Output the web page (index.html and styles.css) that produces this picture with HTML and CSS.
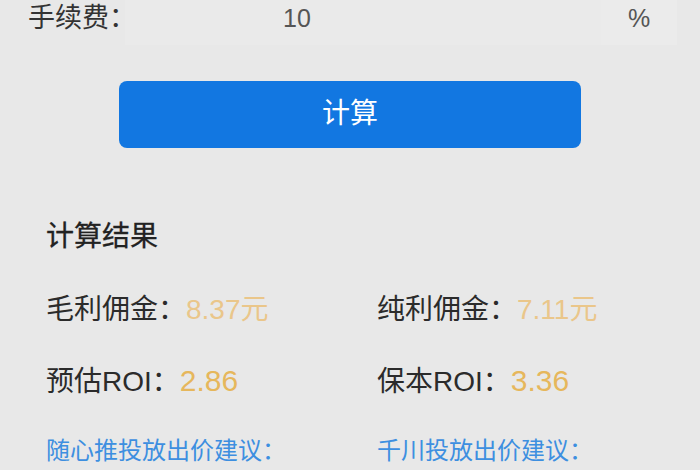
FILE: index.html
```html
<!DOCTYPE html>
<html lang="zh">
<head>
<meta charset="utf-8">
<link rel="stylesheet" href="styles.css">
</head>
<body>
<div class="page">
  <div class="fee-row">
    <span class="fee-label">手续费：</span>
    <div class="fee-input">10</div>
    <div class="fee-unit">%</div>
  </div>
  <div class="btn-wrap">
    <div class="btn">计算</div>
  </div>
  <div class="results">
    <div class="title">计算结果</div>
    <div class="grid">
      <div class="item">毛利佣金：<span class="val light">8.37元</span></div>
      <div class="item">纯利佣金：<span class="val light">7.11元</span></div>
      <div class="item">预估ROI：<span class="val">2.86</span></div>
      <div class="item">保本ROI：<span class="val">3.36</span></div>
      <div class="item link">随心推投放出价建议：</div>
      <div class="item link">千川投放出价建议：</div>
    </div>
  </div>
</div>
</body>
</html>
```
FILE: styles.css
```css
html, body {
  margin: 0;
  padding: 0;
  background: #e8e8e8;
}
body {
  width: 700px;
  height: 470px;
  overflow: hidden;
  font-family: "Liberation Sans", "Noto Sans CJK SC", sans-serif;
  color: #2a2a2a;
}
.fee-row {
  display: flex;
  height: 45px;
  padding-left: 28px;
}
.fee-label {
  flex: 0 0 97px;
  min-width: 0;
  white-space: nowrap;
  font-size: 27px;
  line-height: 36px;
  color: #333;
  position: relative;
  z-index: 1;
}
.fee-input {
  flex: 0 0 318px;
  padding-left: 158px;
  background: #eaeaea;
  font-size: 25px;
  line-height: 36px;
  color: #555;
}
.fee-unit {
  flex: 0 0 76px;
  background: #ebebeb;
  text-align: center;
  font-size: 25px;
  line-height: 36px;
  color: #555;
}
.btn-wrap {
  padding: 36px 0 0 119px;
}
.btn {
  width: 462px;
  height: 67px;
  border-radius: 8px;
  background: #1277e1;
  color: #fff;
  font-size: 28px;
  line-height: 65px;
  text-align: center;
}
.results {
  padding: 72px 0 0 46px;
}
.title {
  font-size: 28px;
  line-height: 34px;
  color: #222;
  -webkit-text-stroke: 0.3px #222;
}
.grid {
  display: grid;
  grid-template-columns: 331px auto;
  row-gap: 35px;
  margin-top: 38px;
}
.item {
  font-size: 28px;
  line-height: 36px;
  color: #2b2b2b;
  white-space: nowrap;
}
.val {
  color: #e6b75c;
  font-size: 30px;
}
.val.light {
  color: #eac68a;
  font-size: 28px;
}
.link {
  color: #3d8fe0;
  font-size: 24px;
  line-height: 32px;
}
```
